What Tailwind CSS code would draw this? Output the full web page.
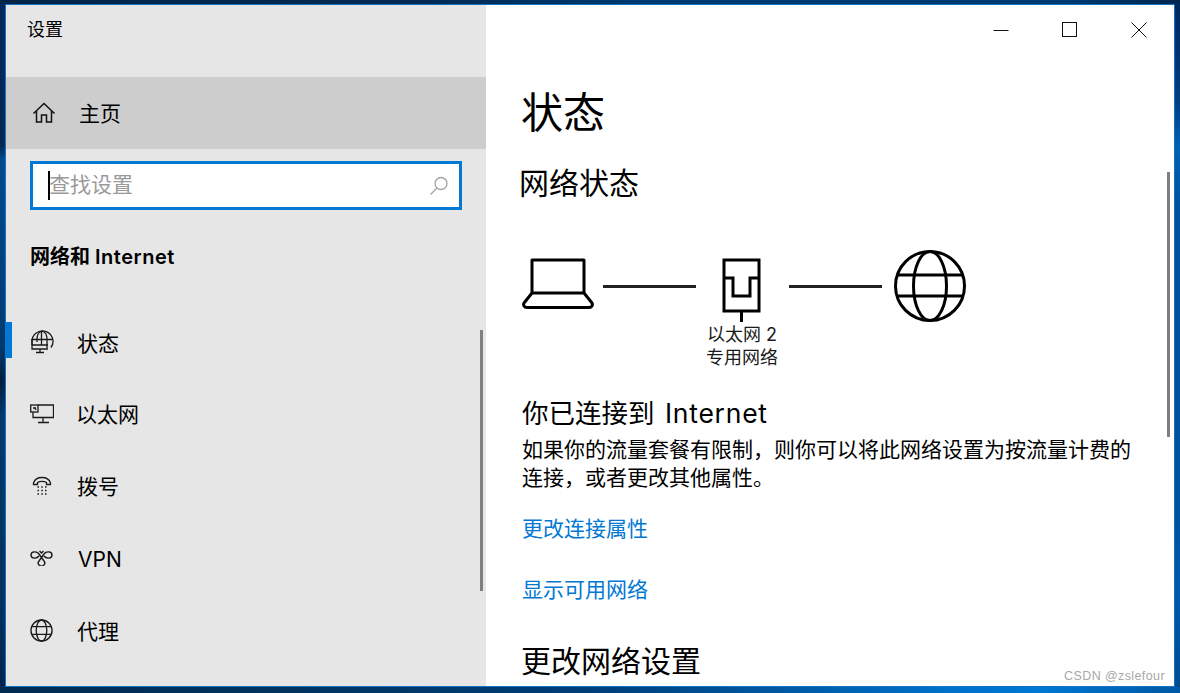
<!DOCTYPE html>
<html lang="zh"><head><meta charset="utf-8">
<script src="https://cdn.jsdelivr.net/npm/@tailwindcss/browser@4"></script>
</head>
<body class="m-0 overflow-hidden">
<div class="w-[1180px] h-[693px] overflow-hidden pt-[4px] pl-[5px] bg-no-repeat bg-[#00386e] bg-[linear-gradient(90deg,#012448,#022a52_35%,#003a70_55%,#003a72_90%,#01264c),linear-gradient(90deg,#012a50,#00345f_25%,#003e78_50%,#0070c8_80%,#0078d4_88%,#0058a4),linear-gradient(180deg,#00285a,#002a55_21%,#004a90_23%,#003a70_50%,#001f3d_55%,#00396e_60%,#00315f_88%,#00224a),linear-gradient(180deg,#00265a,#003e80_15%,#0060b0_21%,#00509a_30%,#00509a_75%,#0058a8_85%,#004a8c)] [background-size:100%_4px,100%_6px,5px_100%,5px_100%] [background-position:top,bottom,left,right] font-['Inter','Noto_Sans_CJK_SC',sans-serif] text-black">
  <div class="relative w-[1170px] h-[683px] flex border border-[#1272c4] overflow-hidden bg-white">
    <!-- sidebar -->
    <aside class="relative w-[480px] shrink-0 bg-[#e6e6e6] flex flex-col">
      <div class="h-[72px] pl-[21px] pt-[12px] text-[18px] leading-[26px]">设置</div>
      <div class="h-[72px] flex items-center bg-[#cdcdcd] pl-[26px] gap-[23px] text-[21px]">
        <svg width="24" height="24" viewBox="0 0 24 24" fill="none" stroke="#111" stroke-width="1.500"><path d="M1.500 12.500 12 2.500l10.500 10M4.500 10v11h5v-7h5v7h5V10"/></svg>
        <span class="leading-[28px] pt-[1px]">主页</span>
      </div>
      <div class="mt-[12px] ml-[24px] w-[432px] h-[49px] border-[3px] border-[#0078d4] bg-white flex items-center pl-[15px] pr-[10px] relative">
        <span class="w-[2px] h-[29px] bg-black shrink-0"></span>
        <span class="text-[21px] leading-[28px] text-[#9a9a9a] -ml-[1px] -mt-[2px]">查找设置</span>
        <svg class="ml-auto" width="20" height="20" viewBox="0 0 20 20" fill="none" stroke="#a3a3a3" stroke-width="1.300"><circle cx="12" cy="7.500" r="6"/><path d="m8 12-6.500 6.500"/></svg>
      </div>
      <div class="mt-[30px] ml-[24px] h-[34px] text-[20px] leading-[34px] font-semibold">网络和 <span class="tracking-[0.5px]">Internet</span></div>
      <nav class="mt-[32px] flex flex-col">
        <div class="relative h-[72px] flex items-center pl-[24px] gap-[23px] text-[21px]">
          <span class="absolute left-0 top-[16px] w-[6px] h-[36px] bg-[#0078d4]"></span>
          <svg width="24" height="24" viewBox="0 0 24 24" fill="none" stroke="#1a1a1a" stroke-width="1.300"><path d="M2 15V12a10.500 10.500 0 1 1 19 5.500"/><path d="M1.500 9.500h21M2 15h16M7 9c0-4 2-7 5-8 3 1 5 4 5 8v9M7 9v3M11.500 1v14"/><path d="M2 9v10h16M10 19v3M6 22.500h8"/></svg>
          <span class="leading-[28px] pt-[3px]">状态</span>
        </div>
        <div class="h-[72px] flex items-center pl-[24px] gap-[22px] text-[21px]">
          <svg width="24" height="20" viewBox="0 0 24 20" fill="none" stroke="#1a1a1a" stroke-width="1.300"><path d="M8 1h15.500v12.500H3V8M13 13.500v4.500M8 18.500h11"/><rect x="0.700" y="1" width="7.300" height="7"/><path d="M3 4h2.500v2"/></svg>
          <span class="leading-[28px] pt-[1px]">以太网</span>
        </div>
        <div class="h-[72px] flex items-center pl-[26px] gap-[25px] text-[21px]">
          <svg width="20" height="20" viewBox="0 0 20 20" fill="none" stroke="#1a1a1a" stroke-width="1.300"><path d="M1.500 8.500V7C3 2.500 7 1.500 10 1.500S17 2.500 18.500 7v1.500h-4V6.500C13 5.500 11.500 5.300 10 5.300S7 5.500 5.500 6.500v2z"/><path d="M5.500 11h1.500M9.300 11h1.500M13 11h1.500M5.500 14.500h1.500M9.300 14.500h1.500M13 14.500h1.500M5.500 18h1.500M9.300 18h1.500M13 18h1.500" stroke-width="1.500"/></svg>
          <span class="leading-[28px] pt-[1px]">拨号</span>
        </div>
        <div class="h-[72px] flex items-center pl-[24px] gap-[25px] text-[21px]">
          <svg width="23" height="16" viewBox="0 0 23 16" fill="none" stroke="#1a1a1a" stroke-width="1.400"><path d="M9 6C7 9 1 9 1 5s6-4 8-1l5 7a3.200 3.200 0 1 1-5 0l5-7c2-3 8-3 8 1s-6 4-8 1"/><path d="M9.500 1 11.500 3 13.500 1"/></svg>
          <span class="leading-[28px] pt-[3px]">VPN</span>
        </div>
        <div class="h-[72px] flex items-center pl-[24px] gap-[24px] text-[21px]">
          <svg width="23" height="23" viewBox="0 0 24 24" fill="none" stroke="#1a1a1a" stroke-width="1.400"><circle cx="12" cy="12" r="11"/><ellipse cx="12" cy="12" rx="5.500" ry="11"/><path d="M1.800 8h20.400M1.800 16h20.400"/></svg>
          <span class="leading-[28px] pt-[3px]">代理</span>
        </div>
      </nav>
      <span class="absolute left-[474px] top-[325px] w-[3px] h-[261px] bg-[#7f7f7f]"></span>
    </aside>
    <!-- content -->
    <main class="relative flex-1 pl-[36px] flex flex-col items-start">
      <div class="absolute right-[1px] top-0 flex h-[50px] items-center">
        <div class="w-[69px] h-[50px] flex items-center justify-center"><svg width="16" height="16" viewBox="0 0 16 16" stroke="#111" fill="none"><path d="M0.500 8.500h15"/></svg></div>
        <div class="w-[69px] h-[50px] flex items-center justify-center"><svg width="16" height="16" viewBox="0 0 16 16" stroke="#111" fill="none"><rect x="0.500" y="0.500" width="14" height="14"/></svg></div>
        <div class="w-[69px] h-[50px] flex items-center justify-center"><svg width="16" height="16" viewBox="0 0 16 16" stroke="#111" fill="none"><path d="m0.500 0.500 15 15M15.500 0.500l-15 15"/></svg></div>
      </div>
      <h1 class="mt-[80px] -ml-[1px] h-[56px] text-[42px] leading-[56px] font-normal">状态</h1>
      <h2 class="mt-[20px] -ml-[3px] h-[44px] text-[30px] leading-[44px] font-normal">网络状态</h2>
      <div class="mt-[45px] flex items-start">
        <svg class="mt-[8px]" width="72" height="52" viewBox="0 0 72 52" fill="none" stroke="#000" stroke-width="3"><path d="M10 35V2h52v33M10 35h52M10 35 2 45c-1 2 0 4.500 3 4.500h62c3 0 4-2.500 3-4.500l-8-10" stroke-linejoin="round"/></svg>
        <span class="mt-[35px] ml-[9px] w-[93px] h-[3px] bg-[#222]"></span>
        <div class="relative ml-[26px] mt-[8px] w-[40px] flex flex-col items-center">
          <svg width="40" height="64" viewBox="0 0 40 64" fill="none" stroke="#000" stroke-width="3"><rect x="2" y="2" width="35" height="51"/><path d="M2 20h9v18h17V20h9"/><path d="M19.500 53V64"/></svg>
          <div class="absolute top-[65px] left-1/2 -translate-x-1/2 whitespace-nowrap text-center text-[18px] leading-[23px] text-[#1a1a1a]"><div>以太网 2</div><div>专用网络</div></div>
        </div>
        <span class="mt-[35px] ml-[27px] w-[93px] h-[3px] bg-[#222]"></span>
        <svg class="ml-[12px] mt-[0px]" width="72" height="72" viewBox="0 0 72 72" fill="none" stroke="#000" stroke-width="3"><circle cx="36" cy="36" r="34.500"/><ellipse cx="36" cy="36" rx="16.500" ry="34.500"/><path d="M4 25h64M4 46h64"/></svg>
      </div>
      <h3 class="mt-[71px] h-[40px] text-[26.500px] leading-[40px] font-normal">你已连接到 <span class="ml-[3px] tracking-[0.75px]">Internet</span></h3>
      <p class="mt-[3px] w-[620px] text-[21px] leading-[28px]">如果你的流量套餐有限制，则你可以将此网络设置为按流量计费的连接，或者更改其他属性。</p>
      <a class="mt-[22px] h-[30px] text-[21px] leading-[30px] text-[#0078d4]">更改连接属性</a>
      <a class="mt-[31px] h-[30px] text-[21px] leading-[30px] text-[#0078d4]">显示可用网络</a>
      <h2 class="mt-[33px] -ml-[1px] h-[46px] text-[30px] leading-[46px] font-normal">更改网络设置</h2>
      <span class="absolute left-[681px] top-[167px] w-[3px] h-[265px] bg-[#7f7f7f]"></span>
      <span class="absolute right-[9px] bottom-[2px] text-[12.500px] leading-[16px] text-[#a8a8a8] font-['Liberation_Sans',sans-serif] tracking-[0.4px]">CSDN @zslefour</span>
    </main>
  </div>
</div>
</body></html>
